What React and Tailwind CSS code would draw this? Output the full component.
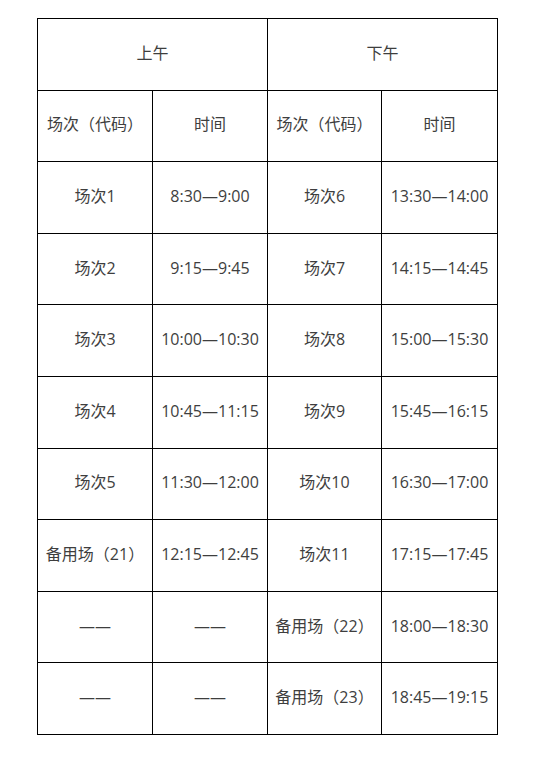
import React from 'react';

const rows = [
  ['场次1', '8:30—9:00', '场次6', '13:30—14:00'],
  ['场次2', '9:15—9:45', '场次7', '14:15—14:45'],
  ['场次3', '10:00—10:30', '场次8', '15:00—15:30'],
  ['场次4', '10:45—11:15', '场次9', '15:45—16:15'],
  ['场次5', '11:30—12:00', '场次10', '16:30—17:00'],
  ['备用场（21）', '12:15—12:45', '场次11', '17:15—17:45'],
  ['——', '——', '备用场（22）', '18:00—18:30'],
  ['——', '——', '备用场（23）', '18:45—19:15'],
];

const cell = 'border border-black text-center align-middle p-0 pb-[3px] font-normal leading-[20px]';

export default function App() {
  return (
    <div
      className="bg-white min-h-[757px] pt-[18px] pl-[37px] text-[16px] text-[#3e3e3e]"
      style={{ fontFamily: '"Open Sans", "Noto Sans CJK SC", sans-serif' }}
    >
      <table className="border-collapse table-fixed w-[461px]">
        <colgroup>
          <col className="w-[115px]" />
          <col className="w-[115px]" />
          <col className="w-[114px]" />
          <col className="w-[116px]" />
        </colgroup>
        <tbody>
          <tr className="h-[71.6px]">
            <td colSpan={2} className={cell}>上午</td>
            <td colSpan={2} className={cell}>下午</td>
          </tr>
          <tr className="h-[71.6px]">
            <td className={cell}>场次（代码）</td>
            <td className={cell}>时间</td>
            <td className={cell}>场次（代码）</td>
            <td className={cell}>时间</td>
          </tr>
          {rows.map((r, i) => (
            <tr key={i} className="h-[71.6px]">
              {r.map((c, j) => (
                <td key={j} className={cell}>{c}</td>
              ))}
            </tr>
          ))}
        </tbody>
      </table>
    </div>
  );
}
